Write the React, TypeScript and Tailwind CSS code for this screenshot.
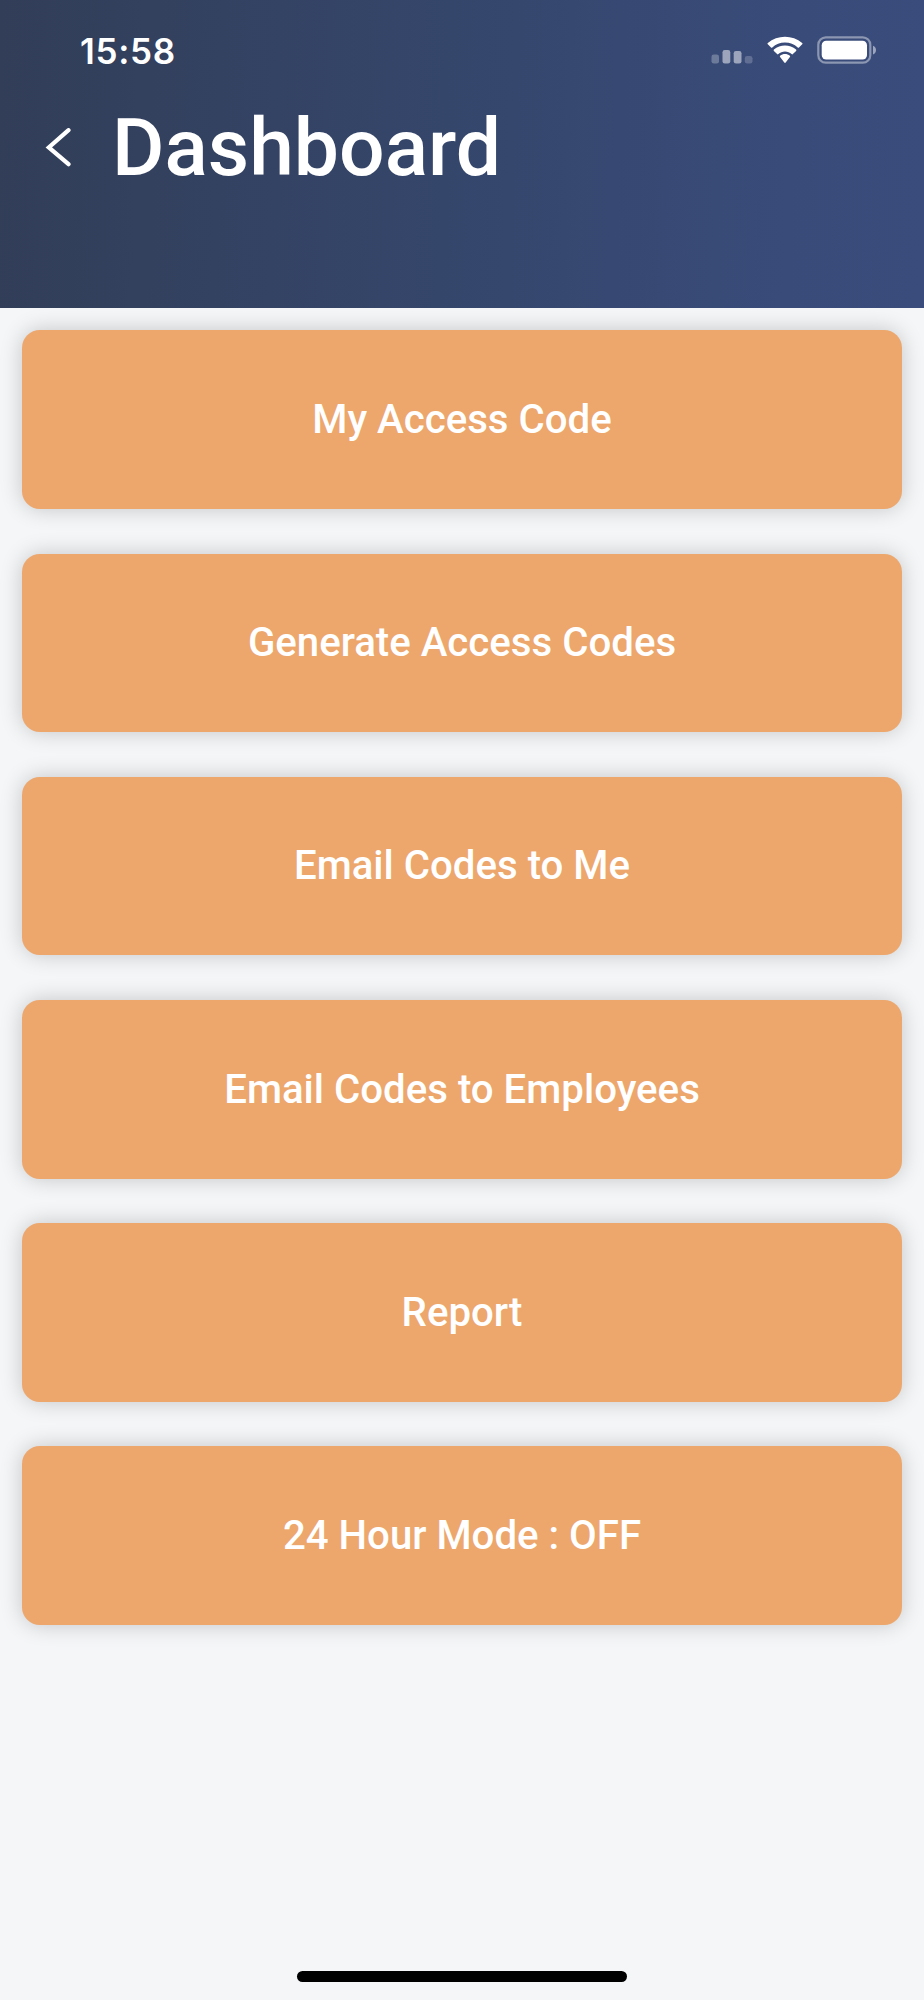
const actions = [
  'My Access Code',
  'Generate Access Codes',
  'Email Codes to Me',
  'Email Codes to Employees',
  'Report',
  '24 Hour Mode : OFF',
]

export default function App() {
  return (
    <main className="flex h-[2000px] w-[924px] flex-col overflow-hidden bg-[#f4f6f8] font-[Roboto,sans-serif]">
      <header className="h-[308px] shrink-0 bg-linear-[92deg,#323e58,#35466b_48%,#394b79_85%,#3a4c7b] text-white">
        <StatusBar />
        <div className="flex h-[96px] items-center pl-[45px]">
          <button aria-label="Back">
            <svg width="27" height="40" viewBox="0 0 27 40" fill="none" className="block">
              <path d="M23.5 2.2L3.8 19.4l19.7 16.8" stroke="currentColor" strokeWidth="4.2" strokeLinecap="round" strokeLinejoin="miter" />
            </svg>
          </button>
          <h1 className="ml-[40px] text-[80.4px] leading-[94px] font-medium">Dashboard</h1>
        </div>
      </header>

      <div className="flex flex-1 flex-col gap-[44.6px] px-[22.3px] pt-[22.4px]">
        {actions.map(label => (
          <button
            key={label}
            className="h-[178.6px] shrink-0 rounded-[18px] bg-[#eda66b] pt-px text-[40.2px] font-medium text-white shadow-[0_0_22px_rgba(0,0,0,0.2)]"
          >
            {label}
          </button>
        ))}
      </div>

      {/* Home indicator */}
      <div className="mx-auto mb-[18px] h-[11px] w-[330px] shrink-0 rounded-full bg-black" />
    </main>
  )
}

function StatusBar() {
  return (
    <div className="flex h-[100px] items-center justify-between pr-[47px] pl-[80px]">
      <span className="pt-[2px] font-[Inter,sans-serif] text-[35px] font-semibold tracking-[0.7px]">15:58</span>
      <div className="flex items-center">
        <svg width="42" height="28" viewBox="0 0 42 28" fill="white" className="block">
          <rect x="0.5" y="18.5" width="7.5" height="9" rx="2.3" opacity="0.27" />
          <rect x="11.5" y="14" width="7.8" height="13.5" rx="2.3" opacity="0.5" />
          <rect x="22.7" y="15" width="7.8" height="12.5" rx="2.3" opacity="0.5" />
          <rect x="33.8" y="20" width="7.7" height="7.5" rx="2.3" opacity="0.2" />
        </svg>
        {/* Wifi */}
        <svg width="36" height="28" viewBox="0 0 36 28" fill="white" className="ml-[14px] block">
          <path d="M18 6.600c4.900 0 9.300 1.800 12.700 4.900.4.400.9.400 1.300 0l3.200-3.200c.4-.4.400-.9 0-1.300-9.700-8.400-24.700-8.400-34.400 0-.4.400-.4.900 0 1.300L4 11.500c.4.400.9.400 1.300 0C8.700 8.400 13.100 6.600 18 6.600z" />
          <path d="M18 15.600c2.500 0 4.800.9 6.600 2.500.4.400.9.400 1.300 0l3.200-3.200c.4-.4.400-.9 0-1.300-6.300-5.500-15.900-5.500-22.200 0-.4.400-.4.900 0 1.300l3.200 3.200c.4.400.9.400 1.300 0 1.800-1.600 4.100-2.500 6.600-2.500z" />
          <path d="M22.900 21.100c.4-.4.400-.9 0-1.300-2.800-2.400-7-2.400-9.800 0-.4.400-.4.900 0 1.300l4.200 5.500c.4.500 1 .5 1.400 0z" />
        </svg>
        {/* Battery */}
        <svg width="60" height="28" viewBox="0 0 60 28" fill="none" className="ml-[14px] block">
          <rect x="1.3" y="1.3" width="52" height="25.4" rx="7.5" stroke="white" strokeWidth="2.2" opacity="0.42" />
          <rect x="4.7" y="4.8" width="45.3" height="18.8" rx="4.5" fill="white" />
          <path d="M56 9.700c2 .8 3 2.400 3 4.400s-1 3.600-3 4.400z" fill="white" opacity="0.5" />
        </svg>
      </div>
    </div>
  )
}
